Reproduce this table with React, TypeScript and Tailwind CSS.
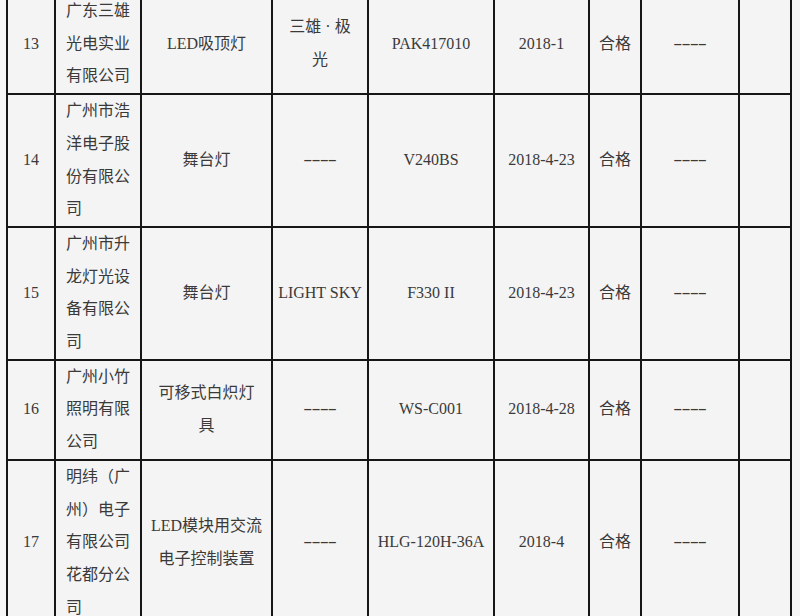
import React from "react";

type Row = {
  no: string;
  company: string;
  product: React.ReactNode;
  brand: React.ReactNode;
  model: string;
  date: string;
  result: string;
};

const Dash = () => <span className="inline-block scale-x-[1.7] tracking-[-0.5px]">----</span>;

const rows: Row[] = [
  {
    no: "13",
    company: "广东三雄光电实业有限公司",
    product: "LED吸顶灯",
    brand: (
      <>
        三雄<span className="px-[4px]">·</span>极
        <br />光
      </>
    ),
    model: "PAK417010",
    date: "2018-1",
    result: "合格",
  },
  {
    no: "14",
    company: "广州市浩洋电子股份有限公司",
    product: "舞台灯",
    brand: <Dash />,
    model: "V240BS",
    date: "2018-4-23",
    result: "合格",
  },
  {
    no: "15",
    company: "广州市升龙灯光设备有限公司",
    product: "舞台灯",
    brand: <span className="whitespace-nowrap">LIGHT SKY</span>,
    model: "F330 II",
    date: "2018-4-23",
    result: "合格",
  },
  {
    no: "16",
    company: "广州小竹照明有限公司",
    product: (
      <>
        可移式白炽灯
        <br />具
      </>
    ),
    brand: <Dash />,
    model: "WS-C001",
    date: "2018-4-28",
    result: "合格",
  },
  {
    no: "17",
    company: "明纬（广州）电子有限公司花都分公司",
    product: "LED模块用交流电子控制装置",
    brand: <Dash />,
    model: "HLG-120H-36A",
    date: "2018-4",
    result: "合格",
  },
];

const cell = "border-2 border-[#161616] py-0 align-middle";

export default function App() {
  return (
    <div className="h-[616px] w-[800px] overflow-hidden bg-[#f6f6f6] font-['Liberation_Serif','Noto_Sans_CJK_SC',serif] text-[16px] leading-[32.7px] text-[#3a3a3a]">
      <table className="-mt-[7px] ml-[6px] w-[786px] table-fixed border-collapse bg-[#f4f4f4]">
        <colgroup>
          <col className="w-[48px]" />
          <col className="w-[86px]" />
          <col className="w-[131px]" />
          <col className="w-[96px]" />
          <col className="w-[126px]" />
          <col className="w-[95px]" />
          <col className="w-[52px]" />
          <col className="w-[98px]" />
          <col className="w-[52px]" />
        </colgroup>
        <tbody>
          {rows.map((r) => (
            <tr key={r.no}>
              <td className={`${cell} px-0 text-center`}>{r.no}</td>
              <td className={`${cell} px-[10px] text-left`}>{r.company}</td>
              <td className={`${cell} px-[8px] text-center`}>{r.product}</td>
              <td className={`${cell} px-[2px] text-center`}>{r.brand}</td>
              <td className={`${cell} px-0 whitespace-nowrap text-center`}>{r.model}</td>
              <td className={`${cell} px-0 whitespace-nowrap text-center`}>{r.date}</td>
              <td className={`${cell} px-0 whitespace-nowrap text-center`}>{r.result}</td>
              <td className={`${cell} px-0 text-center`}>
                <Dash />
              </td>
              <td className={cell}></td>
            </tr>
          ))}
        </tbody>
      </table>
    </div>
  );
}
